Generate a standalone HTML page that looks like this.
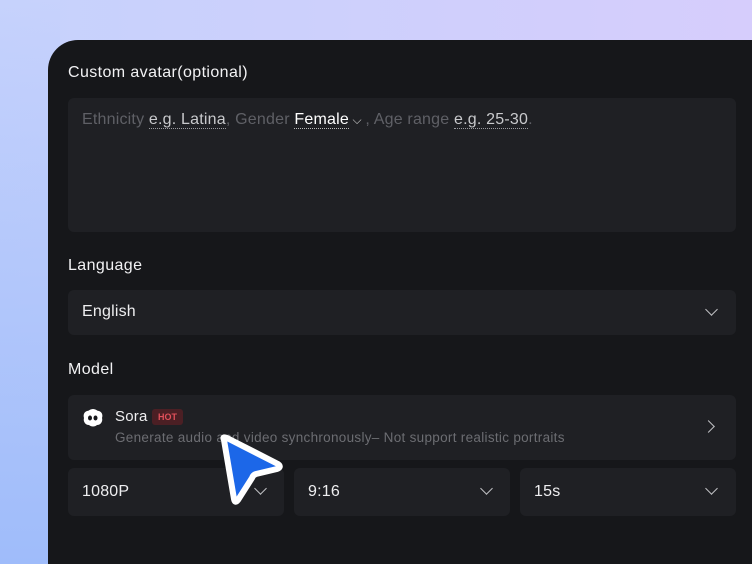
<!DOCTYPE html>
<html><head><style>
*{margin:0;padding:0;box-sizing:border-box}
html,body{width:752px;height:564px;overflow:hidden}
body{position:relative;font-family:"Liberation Sans",sans-serif;background:linear-gradient(160deg,#c9d3fb 0%,#d3ccfb 50%,#a8c2fb 100%);}
.bg2{position:absolute;inset:0;background:linear-gradient(90deg,#c6d2fc 0%,#d6cdfc 100%);}
.bg3{position:absolute;left:0;bottom:0;width:60px;height:564px;background:linear-gradient(180deg,rgba(180,200,252,0) 0%,#9fbcfa 100%);}
.panel{position:absolute;left:48px;top:40px;width:704px;height:524px;background:#16171a;border-top-left-radius:30px;}
.lbl{position:absolute;left:68px;color:#f2f2f4;font-size:16px;letter-spacing:0.4px}
.box{position:absolute;background:#1f2024;border-radius:6px;}
.t{position:absolute;color:#eeeef0;font-size:16px;letter-spacing:0.2px}
.g{color:#5f6066}
.u{color:#c9cacd;border-bottom:1px dotted #9a9ba0}
.w{color:#fff;border-bottom:1px dotted #bbb}
.chev{position:absolute;width:9px;height:9px;border-right:1.5px solid #bfc0c4;border-bottom:1.5px solid #bfc0c4;transform:rotate(45deg);}
</style></head><body>
<div class="bg2"></div><div class="bg3"></div>
<div class="panel"></div>
<div class="lbl" style="top:64px">Custom avatar(optional)</div>
<div class="box" style="left:68px;top:98px;width:668px;height:134px"></div>
<div class="t" style="left:82px;top:111px;letter-spacing:0.2px"><span class="g">Ethnicity </span><span class="u">e.g. Latina</span><span class="g">, Gender </span><span class="w">Female</span><span style="color:#ccc;font-size:12px"> ⌵ </span><span class="g">, Age range </span><span class="u">e.g. 25-30</span><span class="g">.</span></div>
<div class="lbl" style="top:257px">Language</div>
<div class="box" style="left:68px;top:290px;width:668px;height:45px"></div>
<div class="t" style="left:82px;top:303px">English</div>
<div class="chev" style="left:707px;top:305px"></div>
<div class="lbl" style="top:361px">Model</div>
<div class="box" style="left:68px;top:395px;width:668px;height:65px"></div>
<svg style="position:absolute;left:82px;top:408px" width="22" height="20" viewBox="0 0 22 20"><path d="M11 1c3 0 4 2 6 2 3 1 4 4 3 7 1 3-1 7-5 7-2 2-6 2-8 0-4 0-6-4-5-7-1-3 0-6 3-7 2 0 3-2 6-2z" fill="#fff"/><ellipse cx="8" cy="10" rx="2" ry="2.5" fill="#16171a"/><ellipse cx="13.5" cy="10" rx="2" ry="2.5" fill="#16171a"/></svg>
<div class="t" style="left:115px;top:408px;font-size:15px">Sora</div>
<div style="position:absolute;left:152px;top:409px;width:31px;height:16px;background:#4b1f24;border-radius:3px;color:#e0505a;font-size:9px;font-weight:bold;text-align:center;line-height:16px">HOT</div>
<div class="t" style="left:115px;top:430px;font-size:13.5px;color:#6c6d72;letter-spacing:0.3px">Generate audio and video synchronously– Not support realistic portraits</div>
<div class="chev" style="left:704px;top:422px;transform:rotate(-45deg)"></div>
<div class="box" style="left:68px;top:468px;width:216px;height:48px"></div>
<div class="t" style="left:82px;top:483px">1080P</div>
<div class="chev" style="left:256px;top:484px"></div>
<div class="box" style="left:294px;top:468px;width:216px;height:48px"></div>
<div class="t" style="left:308px;top:483px">9:16</div>
<div class="chev" style="left:482px;top:484px"></div>
<div class="box" style="left:520px;top:468px;width:216px;height:48px"></div>
<div class="t" style="left:534px;top:483px">15s</div>
<div class="chev" style="left:707px;top:484px"></div>
<svg style="position:absolute;left:210px;top:428px" width="84" height="84" viewBox="0 0 84 84"><path d="M14 12 Q12 8 17 10 L68 36 Q72 39 67 41 L46 46 Q43 47 42 50 L28 72 Q25 76 24 71 Z" fill="#1c67e8" stroke="#fff" stroke-width="6" stroke-linejoin="round"/></svg>
</body></html>
